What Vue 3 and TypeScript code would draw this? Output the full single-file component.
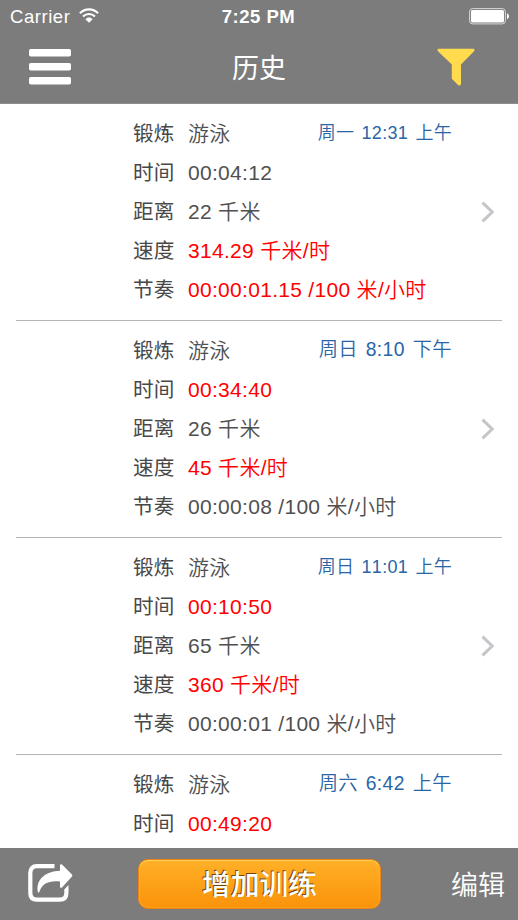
<script setup lang="ts">
interface Metric {
  label: string
  value: string
  record?: boolean
}

interface Workout {
  date: string
  compact?: boolean
  metrics: Metric[]
}

const workouts: Workout[] = [
  {
    date: '周一 12:31 上午',
    compact: true,
    metrics: [
      { label: '锻炼', value: '游泳' },
      { label: '时间', value: '00:04:12' },
      { label: '距离', value: '22 千米' },
      { label: '速度', value: '314.29 千米/时', record: true },
      { label: '节奏', value: '00:00:01.15 /100 米/小时', record: true },
    ],
  },
  {
    date: '周日 8:10 下午',
    metrics: [
      { label: '锻炼', value: '游泳' },
      { label: '时间', value: '00:34:40', record: true },
      { label: '距离', value: '26 千米' },
      { label: '速度', value: '45 千米/时', record: true },
      { label: '节奏', value: '00:00:08 /100 米/小时' },
    ],
  },
  {
    date: '周日 11:01 上午',
    compact: true,
    metrics: [
      { label: '锻炼', value: '游泳' },
      { label: '时间', value: '00:10:50', record: true },
      { label: '距离', value: '65 千米' },
      { label: '速度', value: '360 千米/时', record: true },
      { label: '节奏', value: '00:00:01 /100 米/小时' },
    ],
  },
  {
    date: '周六 6:42 上午',
    metrics: [
      { label: '锻炼', value: '游泳' },
      { label: '时间', value: '00:49:20', record: true },
    ],
  },
]
</script>

<template>
  <div class="screen">
    <header class="top">
      <div class="status">
        <div class="carrier">
          <span>Carrier</span>
          <svg class="wifi" width="20" height="15" viewBox="0 0 20 15">
            <g fill="none" stroke="#fff" stroke-width="2.1">
              <path d="M0.9 5.3C5.9 0 14.1 0 19.1 5.3" />
              <path d="M4 8.6C7.3 5.2 12.7 5.2 16 8.6" />
            </g>
            <path d="M6.4 11.2C8.4 9 11.6 9 13.6 11.2L10 14.7Z" fill="#fff" />
          </svg>
        </div>
        <span class="clock">7:25 PM</span>
        <svg class="battery" width="41" height="17" viewBox="0 0 41 17">
          <rect x="0.6" y="0.6" width="35.8" height="15.3" rx="3" fill="none" stroke="#d8d8d8" />
          <rect x="2" y="2" width="33" height="12.5" rx="1.5" fill="#fff" />
          <path d="M38 5.5C40.6 6 40.6 10.5 38 11Z" fill="#fff" />
        </svg>
      </div>
      <div class="nav">
        <button class="icon" aria-label="菜单">
          <svg width="42" height="36" viewBox="0 0 42 36" fill="#fff">
            <rect width="42" height="7.6" rx="1.8" />
            <rect y="14" width="42" height="7.6" rx="1.8" />
            <rect y="28" width="42" height="7.6" rx="1.8" />
          </svg>
        </button>
        <h1>历史</h1>
        <button class="icon" aria-label="筛选">
          <svg width="38" height="38" viewBox="0 0 38 38">
            <path
              d="M1.5 0.7H36.5Q38.2 1.5 37 3.3L24 16.5V36Q23.4 38 21.3 37.2L14.8 30.8V16.5L1 3.3Q-0.2 1.5 1.5 0.7Z"
              fill="#ffdb4d"
            />
          </svg>
        </button>
      </div>
    </header>

    <main class="list">
      <article v-for="workout in workouts" :key="workout.date" class="workout">
        <dl>
          <div v-for="metric in workout.metrics" :key="metric.label" class="metric">
            <dt>{{ metric.label }}</dt>
            <dd :class="{ record: metric.record }">{{ metric.value }}</dd>
          </div>
        </dl>
        <time :class="{ compact: workout.compact }">{{ workout.date }}</time>
        <svg class="chevron" width="14" height="22" viewBox="0 0 14 22">
          <path d="M1.5 1.6L11.2 11L1.5 20.4" fill="none" stroke="#c5c5ca" stroke-width="3" />
        </svg>
      </article>
    </main>

    <footer class="toolbar">
      <button class="icon" aria-label="分享">
        <svg width="46" height="40" viewBox="0 0 46 40">
          <path
            d="M26.5 3.2H9Q2.3 3.2 2.3 10V30Q2.3 36.7 9 36.7H31.5Q38.4 36.7 38.4 30V27"
            fill="none"
            stroke="#fff"
            stroke-width="4.2"
          />
          <path
            d="M32 2Q32.4 .7 34 1.6L44 11.4Q44.8 12.4 44 13.4L34 24.4Q32.4 25.5 32 24V18.5C21 17.3 14 20.5 11.3 29Q10.5 30.5 9.8 29C7.8 16 18 8.2 32 7.8Z"
            fill="#fff"
          />
          <path d="M36.3 26.4L40.5 22V27.5H36.3Z" fill="#fff" />
        </svg>
      </button>
      <button class="add">增加训练</button>
      <button class="edit">编辑</button>
    </footer>
  </div>
</template>

<style>
body {
  background: #fff;
}
</style>

<style scoped>
.screen {
  display: flex;
  flex-direction: column;
  width: 518px;
  height: 920px;
  overflow: hidden;
  background: #fff;
  font-family: "Liberation Sans", "Noto Sans CJK SC", sans-serif;
  font-kerning: none;
}

button {
  padding: 0;
  border: 0;
  background: none;
  color: #fff;
  font-family: inherit;
  white-space: nowrap;
}

svg {
  display: block;
  flex: none;
}

.top {
  flex: none;
  box-sizing: border-box;
  height: 104px;
  background: #7c7c7c;
  border-bottom: 1px solid #8d8d8d;
  color: #fff;
}

.status {
  display: grid;
  grid-template-columns: 1fr auto 1fr;
  align-items: center;
  height: 33px;
  padding: 0 8px 0 10px;
}

.carrier {
  display: flex;
  align-items: center;
  gap: 9px;
  font-size: 18.5px;
  letter-spacing: 0.55px;
}

.wifi {
  margin-bottom: 2px;
}

.clock {
  margin-right: 3px;
  font-size: 18.5px;
  font-weight: 700;
  letter-spacing: 0.5px;
}

.battery {
  justify-self: end;
}

.nav {
  display: grid;
  grid-template-columns: 1fr auto 1fr;
  align-items: center;
  height: 70px;
  padding: 0 43px 0 29px;
}

.nav .icon {
  margin-top: -2px;
}

.nav .icon:last-child {
  justify-self: end;
}

.nav .icon:first-child {
  justify-self: start;
}

h1 {
  margin: 2px 0 0 14px;
  font-size: 27px;
  font-weight: 400;
  line-height: 40px;
}

.list {
  flex: 1;
  min-height: 0;
  overflow: hidden;
}

.workout {
  display: grid;
  grid-template-columns: 1fr auto 14px;
  box-sizing: border-box;
  height: 217px;
  margin: 0 16px;
  padding: 10px 7px 0 117px;
  border-bottom: 1px solid #b5b5b7;
}

dl {
  margin: 0;
  width: 0;
}

.metric {
  display: flex;
  gap: 14px;
  height: 39px;
  line-height: 39px;
  font-size: 20.6px;
  letter-spacing: 0.25px;
  white-space: nowrap;
  color: #505050;
}

dt {
  flex: none;
  width: 41px;
  color: #484848;
}

dd {
  margin: 0;
  font-size: 21px;
  font-weight: 350;
  letter-spacing: 0.3px;
}

.record {
  color: #f00;
}

time {
  margin-right: 29px;
  font-size: 19.3px;
  font-weight: 350;
  letter-spacing: 0.4px;
  word-spacing: 2px;
  line-height: 38px;
  color: #2a65a6;
  white-space: nowrap;
}

time.compact {
  font-size: 18px;
  letter-spacing: 0.3px;
}

.chevron {
  margin-top: 87px;
}

.toolbar {
  flex: none;
  display: grid;
  grid-template-columns: 110px 243px 1fr;
  align-items: center;
  box-sizing: border-box;
  height: 72px;
  padding: 0 13px 0 28px;
  background: #7c7c7c;
}

.toolbar .icon {
  justify-self: start;
  margin-top: -2px;
}

.add {
  height: 50px;
  padding-bottom: 3px;
  border: 1px solid #ed8213;
  border-radius: 10px;
  background: linear-gradient(#ffb027, #fa930a);
  box-shadow: inset 0 1px 1px #ffd45c, inset 0 0 2px #ffc13d;
  font-size: 28.8px;
  font-weight: 500;
  text-shadow: -1px -1px 0 #704714;
}

.edit {
  justify-self: end;
  margin-top: -2px;
  font-size: 27px;
  font-weight: 350;
}
</style>
